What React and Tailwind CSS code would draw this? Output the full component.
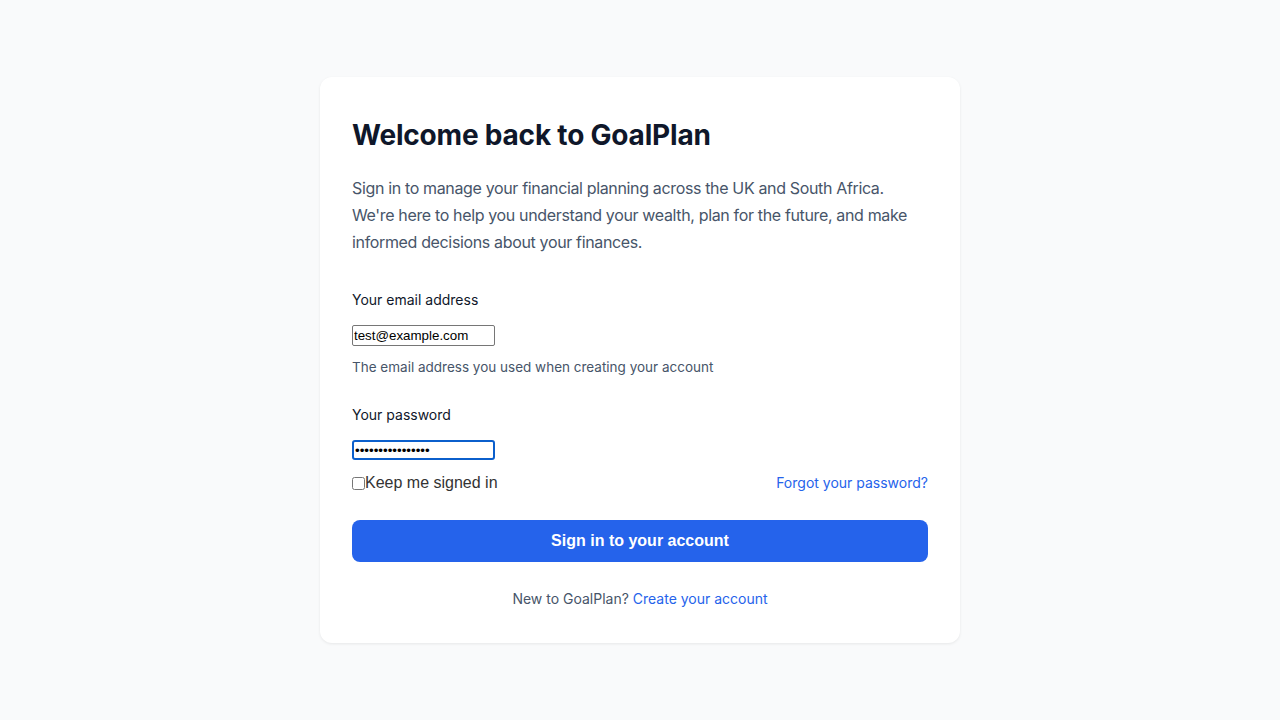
export default function App() {
  return (
    <div className="min-h-screen bg-[#f9fafb] flex items-center justify-center" style={{ fontFamily: "Inter, 'Noto Sans', sans-serif" }}>
      <div className="w-[640px] bg-white rounded-xl shadow-[0_1px_3px_rgba(0,0,0,0.08)] px-8 pt-10 pb-[34px]">
        <h1 className="text-[28px] leading-[36px] font-bold text-[#0f172a] tracking-[-0.2px]">Welcome back to GoalPlan</h1>
        <p className="mt-[22px] text-[16px] leading-[27px] text-[#475569] tracking-[-0.35px]">
          Sign in to manage your financial planning across the UK and South Africa. We're here to help you understand your wealth, plan for the future, and make informed decisions about your finances.
        </p>
        <div className="mt-[34px]">
          <label className="block text-[14px] leading-5 text-[#0f172a]">Your email address</label>
          <input
            type="email"
            defaultValue="test@example.com"
            className="mt-[15px] block w-[143px] h-[21px] border border-[#767676] rounded-[2px] px-[1px] text-[13.33px] text-black bg-white"
            style={{ fontFamily: "'Liberation Sans', Arial, sans-serif" }}
          />
          <p className="mt-[11px] text-[13.5px] leading-5 text-[#475569]">The email address you used when creating your account</p>
        </div>
        <div className="mt-[28px]">
          <label className="block text-[14px] leading-5 text-[#0f172a]">Your password</label>
          <input
            type="password"
            defaultValue="password12345678"
            className="mt-[15px] block w-[143px] h-[20px] border-2 border-[#0b5fcc] rounded-[3px] px-[1px] text-[13.33px] text-black bg-white outline-none"
            style={{ fontFamily: "'Liberation Sans', Arial, sans-serif" }}
          />
        </div>
        <div className="mt-[13px] flex items-center justify-between">
          <label className="flex items-center text-[16px] leading-5 text-[#333]" style={{ fontFamily: "'Liberation Sans', Arial, sans-serif" }}>
            <input type="checkbox" className="w-[13px] h-[13px] m-0 mr-0" />
            Keep me signed in
          </label>
          <a className="text-[14px] leading-5 text-[#2563eb]" href="#">Forgot your password?</a>
        </div>
        <button
          className="mt-[27px] w-full h-[42px] rounded-lg bg-[#2563eb] text-white text-[16px] font-bold"
          style={{ fontFamily: "'Liberation Sans', Arial, sans-serif" }}
        >
          Sign in to your account
        </button>
        <p className="mt-[27px] text-center text-[14px] leading-5 text-[#475569]">
          New to GoalPlan? <a className="text-[#2563eb]" href="#">Create your account</a>
        </p>
      </div>
    </div>
  );
}
